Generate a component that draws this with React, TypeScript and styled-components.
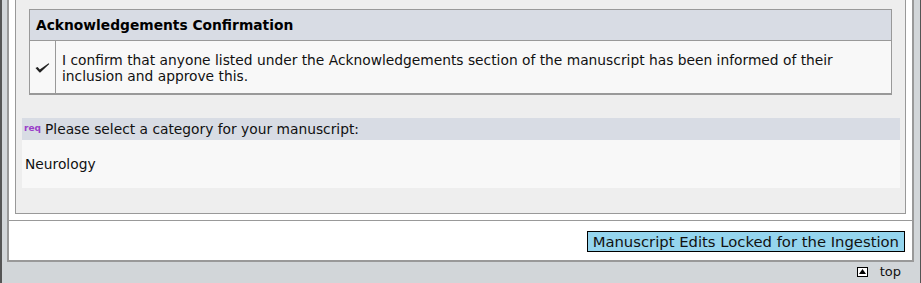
import styled, { createGlobalStyle } from "styled-components";

const GlobalStyle = createGlobalStyle`
  html, body {
    margin: 0;
    padding: 0;
    background: #d2d6d9;
  }
  body {
    font-family: "DejaVu Sans", Verdana, sans-serif;
    color: #111;
  }
`;

const Frame = styled.div`
  height: 283px;
  box-sizing: border-box;
  border-left: 2px solid #555;
  border-right: 1px solid #555;
  padding: 0 6px 0 5px;
  overflow: hidden;
`;

const Box = styled.div`
  background: #fff;
  border: 2px solid #999;
  border-top: none;
`;

const Section = styled.div`
  padding: 0 6px 6px 6px;
`;

const Panel = styled.div`
  background: #eeeeee;
  border: 1px solid #999;
  border-top: none;
  padding: 9px 13px 25px 13px;
`;

const Table = styled.div`
  border: 1px solid #999;
  border-bottom-width: 2px;
  background: #f8f8f8;
`;

const TableHead = styled.div`
  height: 30px;
  display: flex;
  align-items: center;
  padding-left: 6px;
  background: #d8dce4;
  border-bottom: 1px solid #999;
  font-size: 13.8px;
  font-weight: bold;
  color: #000;
`;

const TableRow = styled.div`
  display: flex;
  min-height: 52px;
`;

const CheckCell = styled.div`
  width: 26px;
  flex: 0 0 26px;
  border-right: 1px solid #999;
  display: flex;
  align-items: center;
  justify-content: center;
  padding-top: 2px;
  box-sizing: border-box;
`;

const TextCell = styled.div`
  flex: 1;
  display: flex;
  align-items: center;
  padding: 1px 20px 0 6px;
  font-size: 13.8px;
  line-height: 16px;
`;

const Category = styled.div`
  margin: 23px -8px 0 -7px;
`;

const CategoryHead = styled.div`
  height: 22px;
  display: flex;
  align-items: center;
  background: #d8dce4;
  padding-left: 2px;
  font-size: 13.8px;
`;

const Req = styled.span`
  font-size: 9px;
  font-weight: bold;
  color: #9a3fc9;
  margin-right: 4px;
  position: relative;
  top: -1px;
`;

const CategoryBody = styled.div`
  height: 48px;
  display: flex;
  align-items: center;
  padding-left: 3px;
  background: #f8f8f8;
  font-size: 13.8px;
`;

const Footer = styled.div`
  border-top: 1px solid #999;
  display: flex;
  justify-content: flex-end;
  padding: 10px 7px 8px 0;
`;

const LockedButton = styled.div`
  height: 19px;
  display: flex;
  align-items: center;
  padding: 0 5px;
  background: #95d5ee;
  border: 1px solid #000;
  font-size: 14.8px;
  color: #111;
`;

const TopRow = styled.div`
  display: flex;
  justify-content: flex-end;
  align-items: center;
  gap: 12px;
  padding: 2px 13px 0 0;
  font-size: 13px;
  color: #111;
`;

const TopIcon = styled.span`
  width: 9px;
  height: 8px;
  border: 1px solid #000;
  background: #fff;
  display: flex;
  align-items: center;
  justify-content: center;
`;

function Check() {
  return (
    <svg width="15" height="10" viewBox="0 0 15 10">
      <path d="M0.5 5 L2.6 3.9 L4.8 6.6 L13.6 0.3 L14.3 1 L5.3 9.4 L4.5 9.4 Z" fill="#222" />
    </svg>
  );
}

export default function App() {
  return (
    <>
      <GlobalStyle />
      <Frame>
        <Box>
          <Section>
            <Panel>
              <Table>
                <TableHead>Acknowledgements Confirmation</TableHead>
                <TableRow>
                  <CheckCell>
                    <Check />
                  </CheckCell>
                  <TextCell>
                    I confirm that anyone listed under the Acknowledgements section of the manuscript has been informed of their inclusion and approve this.
                  </TextCell>
                </TableRow>
              </Table>
              <Category>
                <CategoryHead>
                  <Req>req</Req>
                  Please select a category for your manuscript:
                </CategoryHead>
                <CategoryBody>Neurology</CategoryBody>
              </Category>
            </Panel>
          </Section>
          <Footer>
            <LockedButton>Manuscript Edits Locked for the Ingestion</LockedButton>
          </Footer>
        </Box>
        <TopRow>
          <TopIcon>
            <svg width="7" height="5" viewBox="0 0 7 5">
              <path d="M3.5 0 L7 5 L0 5 Z" fill="#000" />
            </svg>
          </TopIcon>
          top
        </TopRow>
      </Frame>
    </>
  );
}
